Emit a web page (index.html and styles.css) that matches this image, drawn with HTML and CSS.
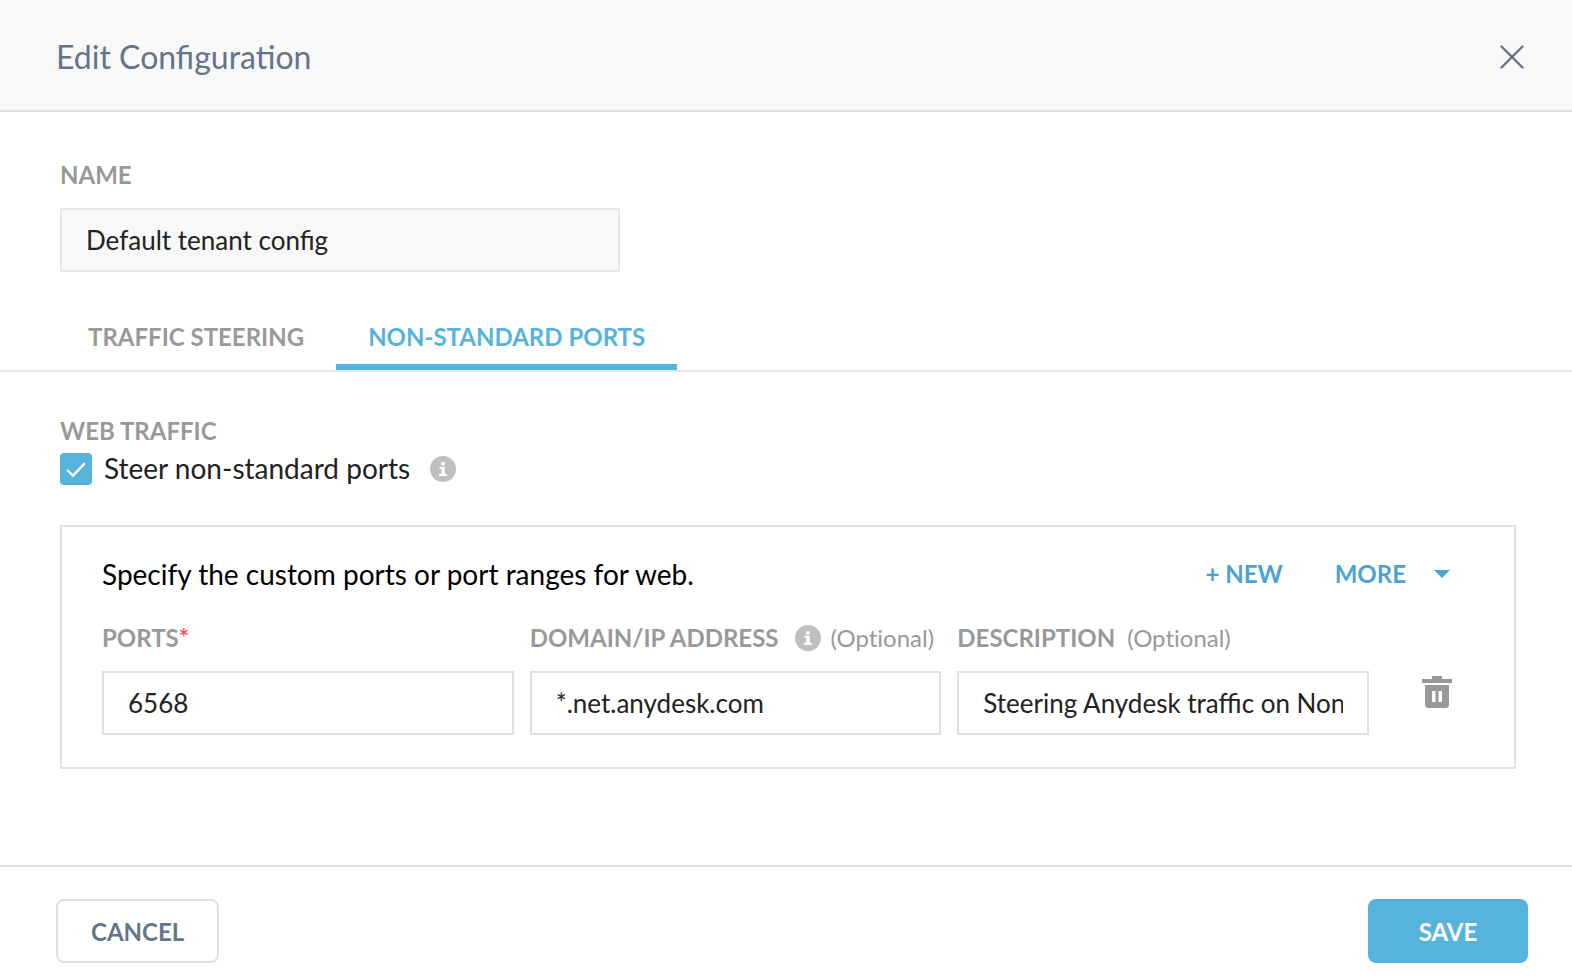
FILE: index.html
```
<!DOCTYPE html>
<html lang="en">
<head>
<meta charset="utf-8">
<title>Edit Configuration</title>
<link rel="stylesheet" href="styles.css">
</head>
<body>
<form class="dialog">
  <header class="dialog-header">
    <h1 class="dialog-title">Edit Configuration</h1>
    <button class="icon-button" type="button" aria-label="Close">
      <svg width="24" height="24" viewBox="0 0 24 24"><path d="M1.5 1.5L22.5 22.5M22.5 1.5L1.5 22.5" fill="none" stroke="#64748a" stroke-width="2.4" stroke-linecap="round"/></svg>
    </button>
  </header>

  <main class="dialog-body">
    <div class="field name-field">
      <label class="label" for="name">NAME</label>
      <input class="input" id="name" type="text" value="Default tenant config" readonly>
    </div>

    <div class="tabs" role="tablist">
      <button class="tab" type="button" role="tab" aria-selected="false">TRAFFIC STEERING</button>
      <button class="tab tab-active" type="button" role="tab" aria-selected="true">NON-STANDARD PORTS</button>
    </div>

    <section class="section">
      <h2 class="label">WEB TRAFFIC</h2>
      <div class="check-row">
        <span class="check-box">
          <input class="check-input" id="steer" type="checkbox" checked>
          <svg class="check-mark" width="32" height="32" viewBox="0 0 32 32"><path d="M7.2 17L13 22.6L25 10.2" fill="none" stroke="#fff" stroke-width="2.4"/></svg>
        </span>
        <label class="check-label" for="steer">Steer non-standard ports</label>
        <svg class="info" viewBox="0 0 26 26" role="img" aria-label="Info"><circle cx="13" cy="13" r="13" fill="#bfbfbf"/><path d="M11.2 6.2h3.6v3h-3.6zM9.6 10.8h5.2v7h2v2.2H9.2v-2.2h2.2v-4.8H9.6z" fill="#fff"/></svg>
      </div>

      <div class="panel">
        <div class="panel-head">
          <p class="panel-text">Specify the custom ports or port ranges for web.</p>
          <div class="actions">
            <button class="action" type="button">+ NEW</button>
            <button class="action" type="button" aria-haspopup="menu">MORE
              <svg width="16" height="8" viewBox="0 0 16 8"><path d="M0 0H16L8 8z" fill="#4ba3d3"/></svg>
            </button>
          </div>
        </div>
        <div class="port-row">
          <div class="field">
            <label class="label" for="ports">PORTS<span class="required">*</span></label>
            <input class="input" id="ports" type="text" value="6568">
          </div>
          <div class="field">
            <div class="label-row">
              <label class="label" for="domain">DOMAIN/IP ADDRESS</label>
              <span class="hint">
                <svg class="info" viewBox="0 0 26 26" role="img" aria-label="Info"><circle cx="13" cy="13" r="13" fill="#bfbfbf"/><path d="M11.2 6.2h3.6v3h-3.6zM9.6 10.8h5.2v7h2v2.2H9.2v-2.2h2.2v-4.8H9.6z" fill="#fff"/></svg>
                <span class="optional">(Optional)</span>
              </span>
            </div>
            <input class="input" id="domain" type="text" value="*.net.anydesk.com">
          </div>
          <div class="field">
            <div class="label-row label-row-tight">
              <label class="label" for="description">DESCRIPTION</label>
              <span class="optional">(Optional)</span>
            </div>
            <input class="input" id="description" type="text" value="Steering Anydesk traffic on Non">
          </div>
          <button class="icon-button delete" type="button" aria-label="Delete">
            <svg width="30" height="32" viewBox="0 0 30 32"><path d="M10 0h10v3h10v4H0V3h10zM3 9h24v19.500q0 3.500-3.500 3.500h-17Q3 32 3 28.500zM10 15v11h3.500V15zM16.500 15v11H20V15z" fill="#999" fill-rule="evenodd"/></svg>
          </button>
        </div>
      </div>
    </section>
  </main>

  <footer class="dialog-footer">
    <button class="button" type="button">CANCEL</button>
    <button class="button button-primary" type="submit">SAVE</button>
  </footer>
</form>
</body>
</html>
```
FILE: styles.css
```
* {
  box-sizing: border-box;
}

body {
  margin: 0;
  background: #fff;
  color: #222;
  font-family: Lato, "Liberation Sans", sans-serif;
  font-size: 24px;
  line-height: 30px;
}

h1, h2, p {
  margin: 0;
}

button, input {
  font: inherit;
}

button {
  padding: 0;
  border: 0;
  background: none;
  cursor: pointer;
}

svg {
  display: block;
  flex: none;
}

.dialog-header {
  display: flex;
  align-items: center;
  justify-content: space-between;
  padding: 38px 48px 34px 56px;
  border-bottom: 2px solid #e0e0e0;
  background: #f8f8f8;
}

.dialog-title {
  color: #64748a;
  font-size: 32px;
  font-weight: 400;
  line-height: 38px;
}

.field {
  display: flex;
  flex-direction: column;
  gap: 18px;
  min-width: 0;
}

.name-field {
  max-width: 620px;
  padding: 48px 0 50px 60px;
}

.label {
  color: #999;
  font-size: 24px;
  font-weight: 700;
  line-height: 30px;
}

.required {
  color: #f05b55;
}

.input {
  width: 100%;
  height: 64px;
  padding: 0 24px;
  border: 2px solid #e0e0e0;
  border-radius: 0;
  background: #fff;
  color: #222;
  font-size: 26px;
}

.input:read-only {
  border-color: #e6e6e6;
  background: #f8f8f8;
}

.tabs {
  display: flex;
  padding-left: 56px;
  border-bottom: 2px solid #e6e6e6;
}

.tab {
  padding: 0 32px 12px;
  border-bottom: 6px solid transparent;
  color: #999;
  font-weight: 700;
}

.tab-active {
  border-bottom-color: #56b4dc;
  color: #56b4dc;
}

.section {
  padding: 44px 56px 96px 60px;
}

.check-row {
  display: flex;
  align-items: center;
  margin: 7px 0 40px;
}

.check-box {
  display: grid;
  margin-right: 12px;
}

.check-input,
.check-mark {
  grid-area: 1 / 1;
}

.check-input {
  width: 32px;
  height: 32px;
  margin: 0;
  border-radius: 4px;
  background: #fff;
  box-shadow: inset 0 0 0 2px #e0e0e0;
  appearance: none;
}

.check-input:checked {
  background: #56b4dc;
  box-shadow: none;
}

.check-mark {
  pointer-events: none;
}

.check-label {
  align-self: flex-start;
  margin-right: 20px;
  font-size: 28px;
  line-height: 30px;
}

.info {
  width: 26px;
  height: 26px;
}

.panel {
  padding: 30px 60px 32px 40px;
  border: 2px solid #e0e0e0;
}

.panel-head {
  display: flex;
  align-items: center;
  justify-content: space-between;
  margin-bottom: 32px;
}

.panel-text {
  color: #000;
  font-size: 28px;
  line-height: 34px;
}

.actions {
  display: flex;
  gap: 52px;
  padding-right: 4px;
}

.action {
  display: flex;
  align-items: center;
  gap: 28px;
  color: #4ba3d3;
  font-weight: 700;
}

.port-row {
  display: grid;
  grid-template-columns: repeat(3, 1fr) 69px;
  gap: 16px;
}

.label-row {
  display: flex;
  align-items: center;
  gap: 16px;
  white-space: nowrap;
}

.label-row-tight {
  gap: 12px;
}

.hint {
  display: flex;
  align-items: center;
  gap: 10px;
}

.optional {
  color: #999;
  font-variant-ligatures: none;
}

.icon-button {
  display: grid;
  place-items: center;
}

.delete {
  place-self: end;
  width: 34px;
  height: 42px;
  margin-bottom: 22px;
}

.dialog-footer {
  display: flex;
  justify-content: space-between;
  padding: 32px 44px 15px 56px;
  border-top: 2px solid #e0e0e0;
}

.button {
  min-width: 160px;
  height: 64px;
  padding: 2px 33px 0;
  border: 2px solid #e0e0e0;
  border-radius: 8px;
  background: #fff;
  color: #64748a;
  font-weight: 700;
}

.button-primary {
  border-color: #56b4dc;
  background: #56b4dc;
  color: #fff;
}
```
